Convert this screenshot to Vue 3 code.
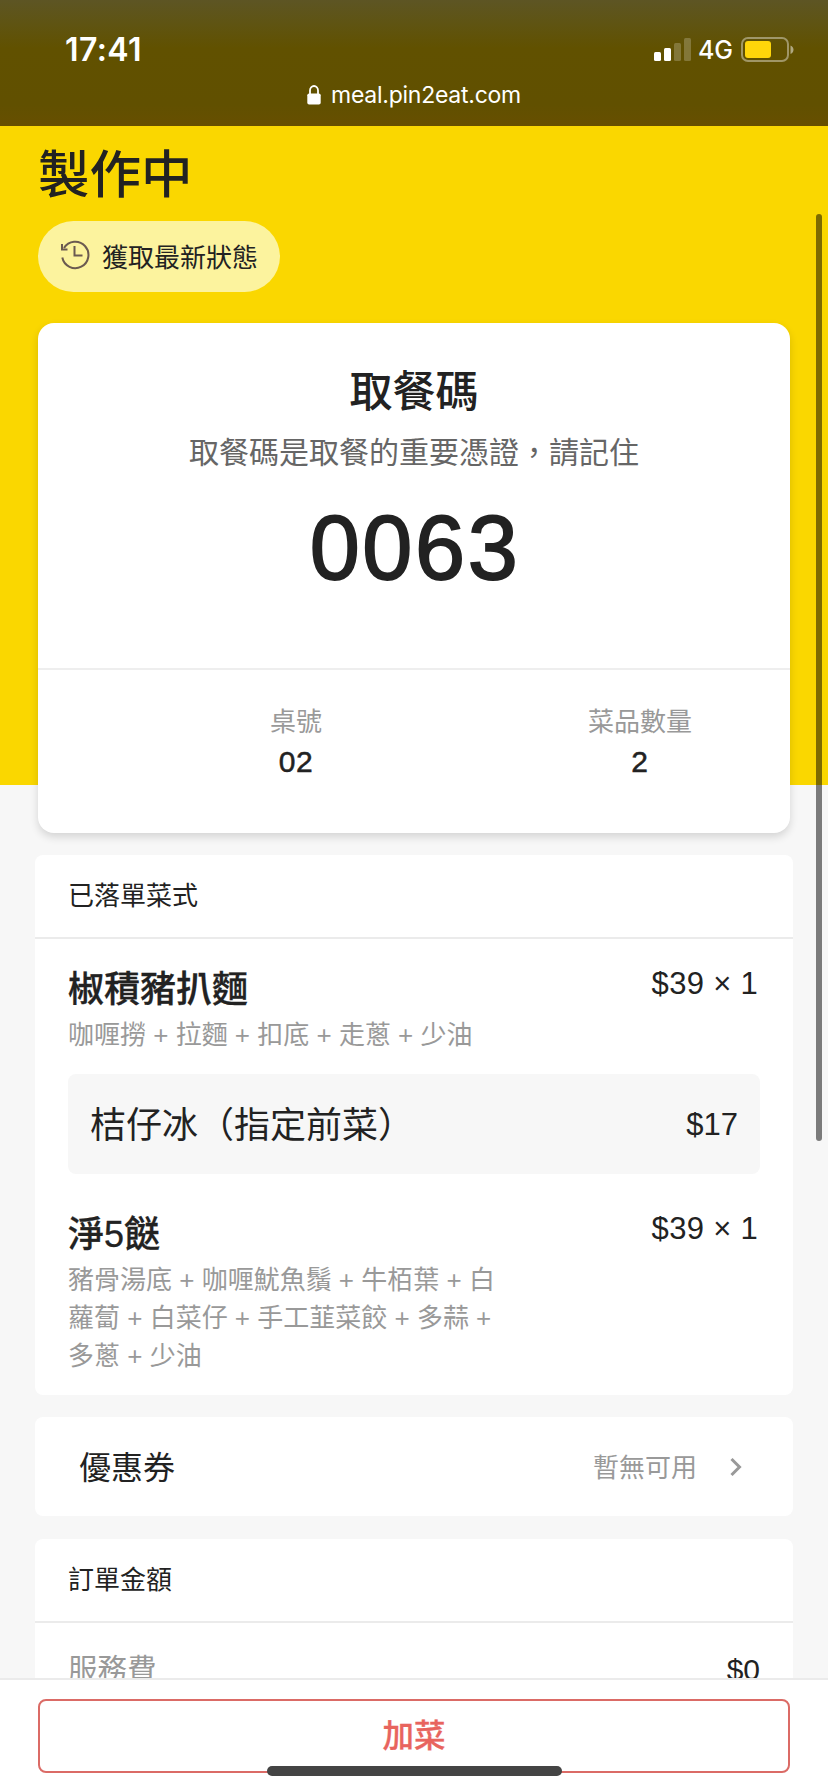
<template>
  <div class="page">
    <header class="browser-bar">
      <div class="status-bar">
        <span class="time">17:41</span>
        <div class="status-icons">
          <svg class="signal" width="37" height="24" viewBox="0 0 37 24" fill="#fff">
            <rect x="0" y="14" width="7" height="9" rx="1.5" />
            <rect x="10" y="10" width="7" height="13" rx="1.5" />
            <rect x="20" y="5" width="7" height="18" rx="1.5" opacity="0.22" />
            <rect x="30" y="0" width="7" height="23" rx="1.5" opacity="0.22" />
          </svg>
          <span class="network">4G</span>
          <svg class="battery" width="53" height="26" viewBox="0 0 53 26">
            <rect x="1" y="1" width="46" height="23" rx="6" fill="none" stroke="#fff" stroke-opacity="0.4" stroke-width="2" />
            <rect x="4" y="4" width="26" height="17" rx="3" fill="#ffd60a" />
            <path d="M49.5 8.5c4 1.5 4 7 0 8.5z" fill="#fff" fill-opacity="0.5" />
          </svg>
        </div>
      </div>
      <div class="address">
        <svg class="lock" width="14" height="20" viewBox="0 0 14 20">
          <path d="M3 10V5.5a4 4.5 0 0 1 8 0V10" fill="none" stroke="#fff" stroke-width="1.8" />
          <rect x="0.3" y="8.5" width="13.4" height="11" rx="1.8" fill="#fff" />
        </svg>
        <span>meal.pin2eat.com</span>
      </div>
    </header>

    <main class="content">
      <div class="hero">
        <h1 class="status-title">製作中</h1>
        <button class="refresh">
          <svg width="30" height="30" viewBox="0 0 30 30" fill="none" stroke="#6b5a50" stroke-width="2">
            <path d="M2.3 17.5A13.2 13.2 0 1 0 4 8" />
            <path d="M2 4V9.5H7.5" />
            <path d="M14.5 6V15.5H22.5" />
          </svg>
          <span>獲取最新狀態</span>
        </button>
      </div>

      <section class="pickup-card">
        <div class="pickup">
          <h2>取餐碼</h2>
          <p>取餐碼是取餐的重要憑證，請記住</p>
          <div class="pickup-code">{{ pickupCode }}</div>
        </div>
        <div class="stats">
          <div v-for="s in stats" :key="s.label" class="stat">
            <span class="stat-label">{{ s.label }}</span>
            <span class="stat-value">{{ s.value }}</span>
          </div>
        </div>
      </section>

      <section class="panel">
        <h3 class="panel-title">已落單菜式</h3>
        <div class="dishes">
          <div v-for="d in dishes" :key="d.name" class="dish">
            <div class="dish-row">
              <span class="dish-name">{{ d.name }}</span>
              <span class="dish-price">${{ d.price }} × {{ d.count }}</span>
            </div>
            <p class="dish-options">{{ d.options.join(' + ') }}</p>
            <div v-for="e in d.extras" :key="e.name" class="extra">
              <span class="extra-name">{{ e.name }}</span>
              <span class="extra-price">${{ e.price }}</span>
            </div>
          </div>
        </div>
      </section>

      <section class="panel coupon">
        <span class="coupon-title">優惠券</span>
        <span class="coupon-value">暫無可用</span>
        <svg width="12" height="20" viewBox="0 0 12 20" fill="none" stroke="#999" stroke-width="3">
          <path d="M1.5 2L9.5 10L1.5 18" />
        </svg>
      </section>

      <section class="panel">
        <h3 class="panel-title">訂單金額</h3>
        <div class="fee">
          <span class="fee-label">服務費</span>
          <span class="fee-value">$0</span>
        </div>
      </section>
    </main>

    <footer class="footer">
      <button class="add-btn">加菜</button>
    </footer>

    <div class="scrollbar"></div>
    <div class="home-indicator"></div>
  </div>
</template>

<script setup>
import { ref } from 'vue'

const pickupCode = ref('0063')

const stats = ref([
  { label: '桌號', value: '02' },
  { label: '菜品數量', value: '2' }
])

const dishes = ref([
  {
    name: '椒積豬扒麵',
    price: 39,
    count: 1,
    options: ['咖喱撈', '拉麵', '扣底', '走蔥', '少油'],
    extras: [{ name: '桔仔冰（指定前菜）', price: 17 }]
  },
  {
    name: '淨5餸',
    price: 39,
    count: 1,
    options: ['豬骨湯底', '咖喱魷魚鬚', '牛栢葉', '白蘿蔔', '白菜仔', '手工韮菜餃', '多蒜', '多蔥', '少油'],
    extras: []
  }
])
</script>

<style>
body { margin: 0; background: #f7f7f7; }
</style>

<style scoped>
.page {
  position: relative;
  display: flex;
  flex-direction: column;
  height: 1792px;
  overflow: hidden;
  background: #f7f7f7;
  color: #222;
  font-family: "Liberation Sans", "Noto Sans CJK TC", sans-serif;
}
h1, h2, h3, p { margin: 0; font-weight: 400; }
button { font-family: inherit; color: inherit; }

.browser-bar {
  box-sizing: border-box;
  height: 126px;
  flex-shrink: 0;
  padding-top: 30px;
  background: linear-gradient(#5d5524 0, #5f5412 24px, #615100 48px, #615000 105px, #674f00 126px);
  color: #fff;
  font-family: Inter, sans-serif;
}
.status-bar {
  display: flex;
  justify-content: space-between;
  height: 40px;
  line-height: 40px;
  padding: 0 34px 0 65px;
}
.time { font-size: 32px; font-weight: 600; letter-spacing: 0.4px; }
.status-icons { display: flex; align-items: center; }
.network { font-size: 25px; font-weight: 500; margin: 0 8px 0 7px; }
.address {
  display: flex;
  justify-content: center;
  align-items: center;
  gap: 10px;
  height: 50px;
  font-size: 23px;
  letter-spacing: -0.25px;
}

.content { flex: 1; min-height: 0; overflow: hidden; }
.hero {
  box-sizing: border-box;
  height: 659px;
  padding: 11px 38px 0;
  background: #fad700;
}
.status-title { font-size: 51.5px; font-weight: 500; line-height: 76px; }
.refresh {
  display: flex;
  align-items: center;
  gap: 12px;
  height: 71px;
  margin-top: 8px;
  padding: 0 22px 3px;
  border: none;
  border-radius: 36px;
  background: #fcf39e;
  font-size: 26px;
}

.pickup-card {
  position: relative;
  box-sizing: border-box;
  height: 510px;
  margin: -462px 38px 22px;
  border-radius: 16px;
  background: #fff;
  box-shadow: 0 4px 8px rgba(0, 0, 0, 0.14);
}
.pickup {
  box-sizing: border-box;
  height: 347px;
  padding-top: 39px;
  border-bottom: 2px solid #eee;
  text-align: center;
}
.pickup h2 { font-size: 43px; font-weight: 500; line-height: 60px; }
.pickup p { font-size: 30px; line-height: 40px; margin-top: 11px; color: #666; }
.pickup-code {
  margin-top: 25px;
  padding-left: 2px;
  font-size: 90px;
  line-height: 100px;
  letter-spacing: 2.6px;
  -webkit-text-stroke: 1.8px #222;
}
.stats {
  display: grid;
  grid-template-columns: repeat(2, 344px);
  padding: 32px 0 0 86px;
}
.stat { display: flex; flex-direction: column; align-items: center; }
.stat-label { font-size: 26px; line-height: 40px; color: #999; }
.stat-value {
  font-size: 30px;
  line-height: 40px;
  letter-spacing: 0.6px;
  -webkit-text-stroke: 0.5px #222;
}

.panel {
  margin: 0 35px 22px;
  border-radius: 8px;
  background: #fff;
}
.panel-title {
  height: 82px;
  padding-left: 33px;
  border-bottom: 2px solid #ebebeb;
  font-size: 26px;
  line-height: 83px;
}
.dishes { padding: 24px 33px 20px; }
.dish + .dish { margin-top: 34px; }
.dish-row {
  display: flex;
  justify-content: space-between;
  height: 53px;
  padding-right: 2px;
}
.dish-name {
  font-size: 36px;
  font-weight: 500;
  line-height: 54px;
  -webkit-text-stroke: 0.3px #222;
}
.dish-price { font-size: 31px; line-height: 41px; letter-spacing: 0.3px; }
.dish-options { width: 440px; font-size: 26px; line-height: 38px; color: #999; }
.extra {
  display: flex;
  justify-content: space-between;
  align-items: center;
  height: 100px;
  margin-top: 20px;
  padding: 0 22px;
  border-radius: 8px;
  background: #f7f7f7;
}
.extra-name { padding-bottom: 4px; font-size: 36px; }
.extra-price { padding-top: 2px; font-size: 31px; }

.coupon {
  display: flex;
  align-items: center;
  box-sizing: border-box;
  height: 99px;
  margin-bottom: 23px;
  padding: 0 51px 0 44px;
}
.coupon-title { flex: 1; padding-bottom: 3px; font-size: 32px; }
.coupon-value { margin-right: 33px; padding-bottom: 3px; font-size: 26px; color: #999; }

.fee {
  display: flex;
  justify-content: space-between;
  padding: 27px 33px 40px;
  font-size: 30px;
  line-height: 40px;
}
.fee-label { color: #999; font-size: 29.5px; }

.footer {
  box-sizing: border-box;
  height: 114px;
  flex-shrink: 0;
  padding: 19px 38px 0;
  border-top: 2px solid #ebebeb;
  background: #fff;
}
.add-btn {
  display: block;
  width: 100%;
  height: 74px;
  padding: 0 0 6px;
  border: 2px solid #db6b66;
  border-radius: 8px;
  background: #fff;
  color: #e8645e;
  font-size: 31.5px;
  font-weight: 500;
  -webkit-text-stroke: 0.3px #e8645e;
}

.scrollbar {
  position: absolute;
  top: 214px;
  right: 6px;
  width: 6px;
  height: 927px;
  border-radius: 3px;
  background: rgba(0, 0, 0, 0.5);
}
.home-indicator {
  position: absolute;
  bottom: 16px;
  left: 267px;
  width: 295px;
  height: 10px;
  border-radius: 5px;
  background: #444;
}
</style>
